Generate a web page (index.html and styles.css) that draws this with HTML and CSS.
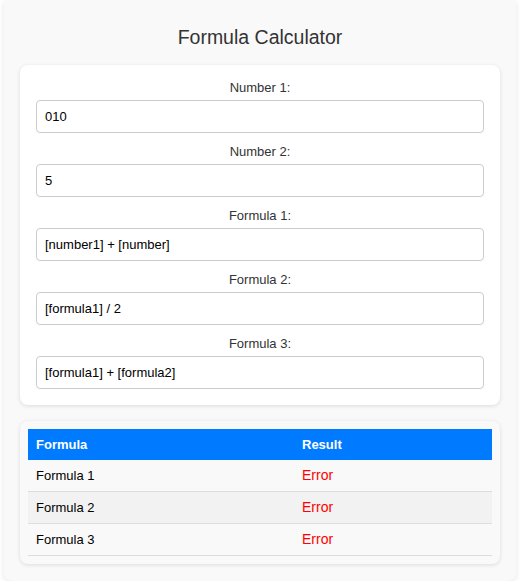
FILE: index.html
```html
<!DOCTYPE html>
<html>
<head>
<meta charset="utf-8">
<link rel="stylesheet" href="styles.css">
</head>
<body>
<div class="container">
  <h1 class="title">Formula Calculator</h1>
  <div class="card">
    <div class="group">
      <label class="label">Number 1:</label>
      <input class="field" type="text" value="010">
    </div>
    <div class="group">
      <label class="label">Number 2:</label>
      <input class="field" type="text" value="5">
    </div>
    <div class="group">
      <label class="label">Formula 1:</label>
      <input class="field" type="text" value="[number1] + [number]">
    </div>
    <div class="group">
      <label class="label">Formula 2:</label>
      <input class="field" type="text" value="[formula1] / 2">
    </div>
    <div class="group">
      <label class="label">Formula 3:</label>
      <input class="field" type="text" value="[formula1] + [formula2]">
    </div>
  </div>
  <div class="card results">
    <table class="table">
      <thead>
        <tr><th class="col-name">Formula</th><th>Result</th></tr>
      </thead>
      <tbody>
        <tr><td>Formula 1</td><td class="error">Error</td></tr>
        <tr><td>Formula 2</td><td class="error">Error</td></tr>
        <tr><td>Formula 3</td><td class="error">Error</td></tr>
      </tbody>
    </table>
  </div>
</div>
</body>
</html>
```
FILE: styles.css
```css
html, body {
  margin: 0;
  padding: 0;
  background: #ffffff;
  font-family: "Liberation Sans", Arial, sans-serif;
  font-size: 13px;
  color: #333;
}
.container {
  margin: 0 4px;
  background: #f9f9f9;
  border-radius: 0 0 8px 8px;
  box-shadow: 0 2px 6px rgba(0,0,0,0.1);
  padding: 26px 16px 17px;
  display: flex;
  flex-direction: column;
  gap: 16px;
}
.title {
  margin: 0;
  text-align: center;
  font-size: 19.5px;
  font-weight: normal;
  line-height: 23px;
  color: #333;
}
.card {
  background: #fff;
  border-radius: 8px;
  box-shadow: 0 1px 4px rgba(0,0,0,0.12);
  padding: 15px 16px 16px;
  display: flex;
  flex-direction: column;
  gap: 11px;
}
.group {
  display: flex;
  flex-direction: column;
  gap: 4px;
}
.label {
  text-align: center;
  line-height: 16px;
  color: #333;
  font-size: 13px;
}
.field {
  box-sizing: border-box;
  height: 33px;
  width: 100%;
  border: 1px solid #ccc;
  border-radius: 4px;
  padding: 0 8px;
  font-family: "Liberation Sans", Arial, sans-serif;
  font-size: 13px;
  color: #000;
  background: #fff;
  outline: none;
}
.results {
  background: #f9f9f9;
  padding: 8px;
}
.table {
  width: 100%;
  border-collapse: collapse;
  font-size: 13px;
}
.table th {
  background: #007bff;
  color: #fff;
  font-weight: bold;
  text-align: left;
  padding: 8px;
  line-height: 15px;
}
.col-name {
  width: 250px;
}
.table td {
  padding: 8px;
  line-height: 15px;
  border-bottom: 1px solid #ddd;
  color: #000;
}
.table tbody tr:nth-child(even) {
  background: #f2f2f2;
}
.table td.error {
  color: #ff0000;
  font-size: 14px;
}
```
